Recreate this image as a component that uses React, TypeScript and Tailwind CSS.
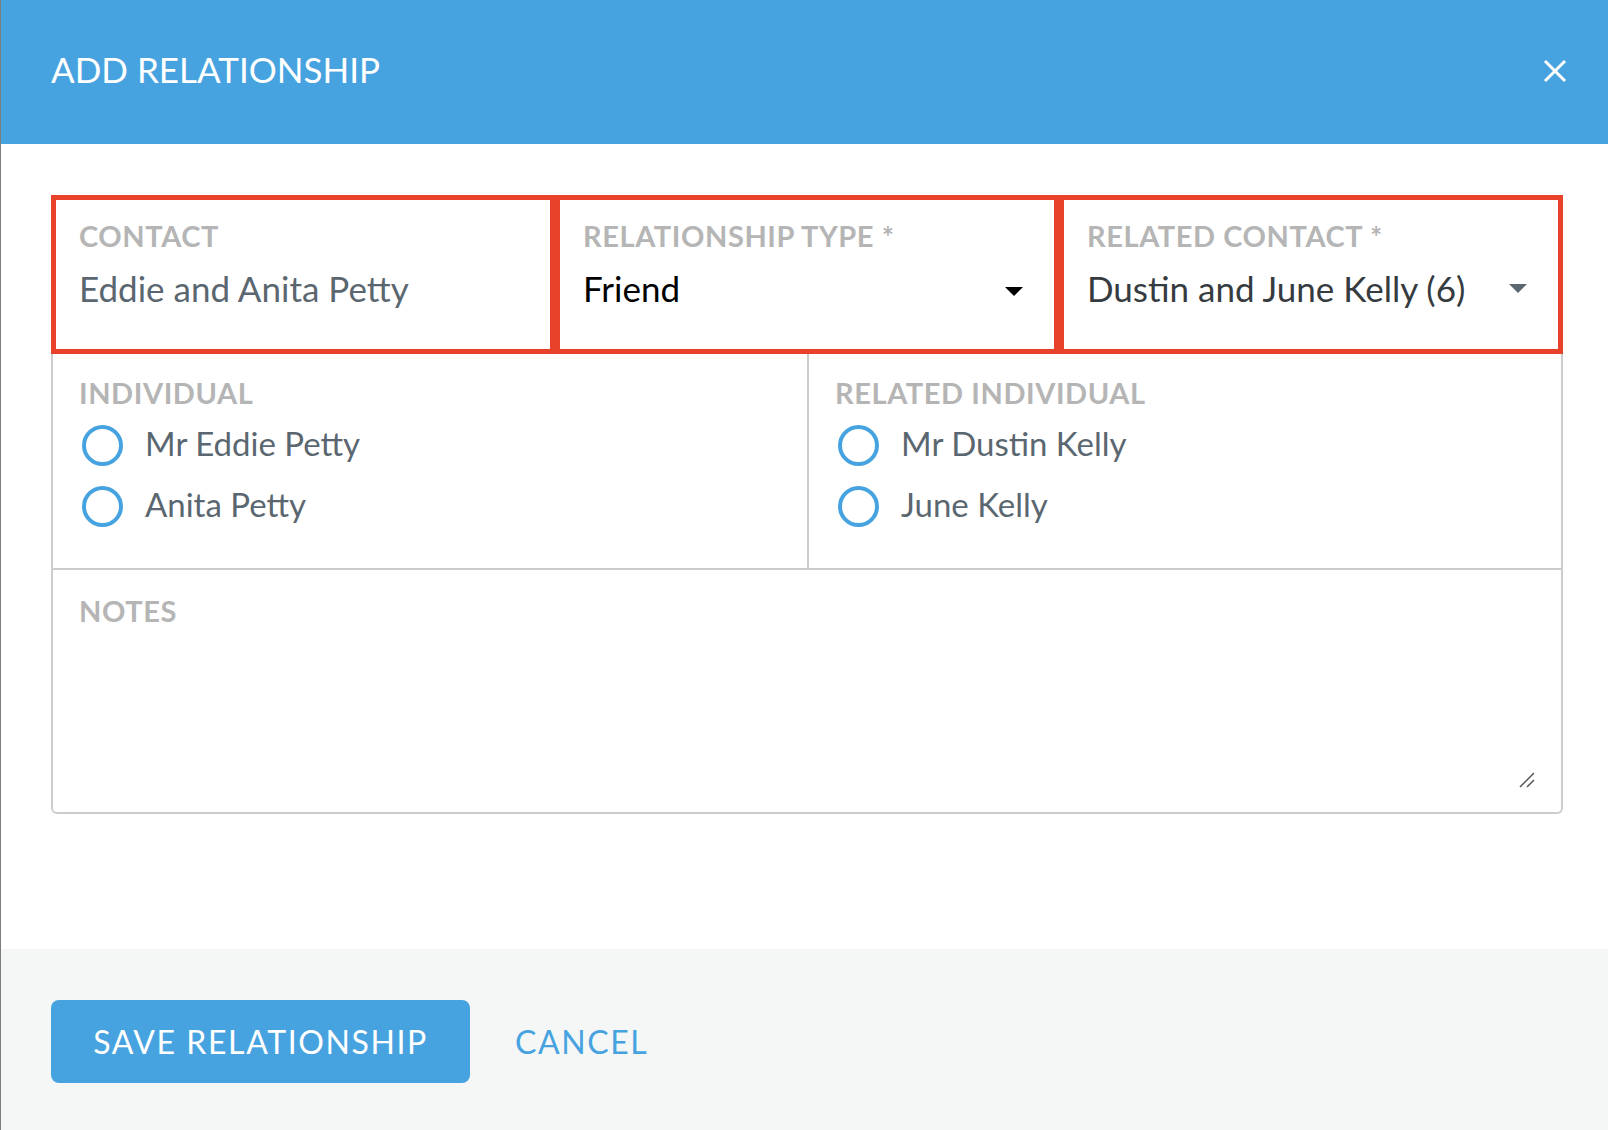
import React from 'react';

const Label = ({ children }: { children: React.ReactNode }) => (
  <div className="text-[29px] leading-[34px] font-bold tracking-[0.02em] text-[#b5b5b5] whitespace-nowrap">{children}</div>
);

const Caret = ({ color }: { color: string }) => (
  <svg width="18" height="9" viewBox="0 0 18 9">
    <path d="M0 0 L18 0 L9 9 Z" fill={color} />
  </svg>
);

const Radio = ({ label }: { label: string }) => (
  <div className="flex items-center h-[61px]">
    <span className="ml-[3px] w-[41px] h-[41px] rounded-full border-[4px] border-[#47a3df] bg-white" />
    <span className="ml-[22px] pb-[6px] text-[33px] leading-[40px] text-[#5b6770]">{label}</span>
  </div>
);

export default function App() {
  return (
    <div className="h-[1130px] flex flex-col bg-white border-l border-[#7d7d7d] font-['Lato',sans-serif]">
      {/* header */}
      <div className="h-[144px] shrink-0 bg-[#47a3df] flex items-center justify-between pl-[50px] pr-[41px] pb-[6px]">
        <h1 className="text-[35px] leading-[44px] text-white">ADD RELATIONSHIP</h1>
        <button aria-label="Close" className="w-[24px] h-[24px] mt-[3px]">
          <svg width="24" height="24" viewBox="0 0 24 24">
            <path d="M2 2 L22 22 M22 2 L2 22" stroke="white" strokeWidth="3" />
          </svg>
        </button>
      </div>

      {/* body */}
      <div className="flex-1 pt-[51px] pl-[50px] pr-[45px]">
        <div className="grid grid-cols-3">
          <div className="h-[159px] border-[5px] border-[#e8432a] pl-[23px] pt-[19px]">
            <Label>CONTACT</Label>
            <div className="mt-[14px] text-[35px] leading-[42px] text-[#5b6770] whitespace-nowrap">Eddie and Anita Petty</div>
          </div>
          <div className="h-[159px] border-[5px] border-[#e8432a] pl-[23px] pr-[31px] pt-[19px]">
            <Label>RELATIONSHIP TYPE *</Label>
            <div className="mt-[14px] flex items-center justify-between">
              <span className="text-[35px] leading-[42px] text-black">Friend</span>
              <span className="mt-[7px]"><Caret color="#000000" /></span>
            </div>
          </div>
          <div className="h-[159px] border-[5px] border-[#e8432a] pl-[23px] pr-[31px] pt-[19px]">
            <Label>RELATED CONTACT *</Label>
            <div className="mt-[14px] flex items-center justify-between">
              <span className="text-[35px] leading-[42px] text-[#363b3f] whitespace-nowrap">Dustin and June Kelly (6)</span>
              <Caret color="#5b6770" />
            </div>
          </div>
        </div>

        <div className="grid grid-cols-2 h-[216px] border-x-2 border-b-2 border-[#cccccc]">
          <div className="pl-[26px] pt-[22px]">
            <Label>INDIVIDUAL</Label>
            <div className="mt-[5px]">
              <Radio label="Mr Eddie Petty" />
              <Radio label="Anita Petty" />
            </div>
          </div>
          <div className="border-l-2 border-[#cccccc] pl-[26px] pt-[22px]">
            <Label>RELATED INDIVIDUAL</Label>
            <div className="mt-[5px]">
              <Radio label="Mr Dustin Kelly" />
              <Radio label="June Kelly" />
            </div>
          </div>
        </div>

        <div className="relative h-[244px] border-x-2 border-b-2 border-[#cccccc] rounded-b-[6px] pl-[26px] pt-[24px]">
          <Label>NOTES</Label>
          <svg className="absolute right-[26px] bottom-[24px]" width="16" height="16" viewBox="0 0 16 16">
            <path d="M1 15 L15 1 M8 15 L15 8" stroke="#555555" strokeWidth="1.5" />
          </svg>
        </div>
      </div>

      {/* footer */}
      <div className="h-[181px] shrink-0 bg-[#f5f7f7] flex items-start pl-[50px] pt-[51px]">
        <button className="h-[83px] w-[419px] rounded-[8px] bg-[#47a3df] text-white text-[32px] tracking-[0.05em]">
          SAVE RELATIONSHIP
        </button>
        <button className="ml-[45px] h-[83px] flex items-center text-[#47a3df] text-[32px] tracking-[0.05em]">
          CANCEL
        </button>
      </div>
    </div>
  );
}
